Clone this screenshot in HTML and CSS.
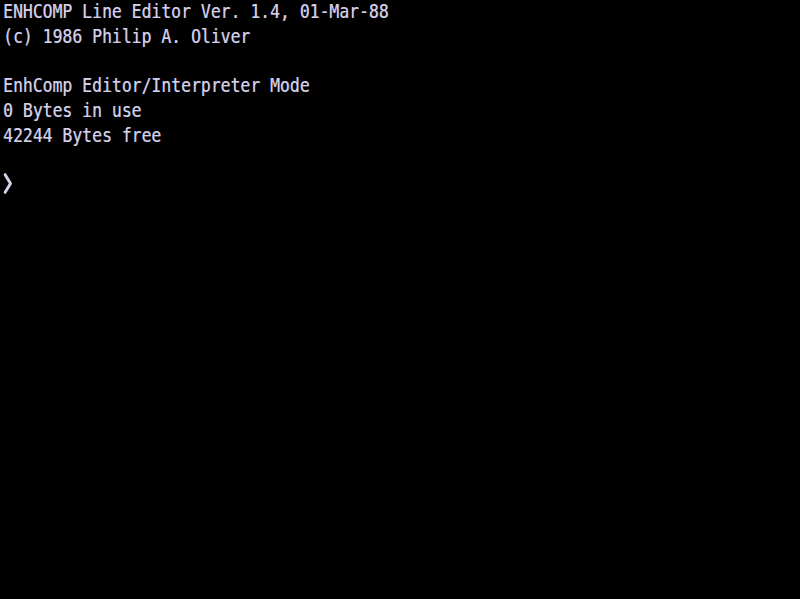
FILE: index.html
```html
<!DOCTYPE html>
<html>
<head>
<meta charset="utf-8">
<link rel="stylesheet" href="styles.css">
</head>
<body>
<div class="screen">
  <div class="text">
    <div class="line">ENHCOMP Line Editor Ver. 1.4, 01-Mar-88</div>
    <div class="line">(c) 1986 Philip A. Oliver</div>
    <div class="line"></div>
    <div class="line">EnhComp Editor/Interpreter Mode</div>
    <div class="line">0 Bytes in use</div>
    <div class="line">42244 Bytes free</div>
    <div class="line"></div>
    <div class="line prompt"><svg class="chev" width="12" height="21" viewBox="0 0 12 21"><polyline points="2.5,1.8 8.8,10.5 2.5,19.2" fill="none" stroke="#d4d0ec" stroke-width="3.2" stroke-linejoin="round" stroke-linecap="round"/></svg></div>
  </div>
</div>
</body>
</html>
```
FILE: styles.css
```css
html, body {
  margin: 0;
  padding: 0;
  background: #000;
  width: 800px;
  height: 599px;
  overflow: hidden;
}
.screen {
  padding: 0 0 0 3px;
}
.text {
  font-family: "DejaVu Sans Mono", monospace;
  font-size: 19.2px;
  line-height: 24.8px;
  color: #d4d0ec;
  text-shadow: 0.6px 0 0 rgba(212, 208, 236, 0.55);
  transform: scaleX(0.856);
  transform-origin: 0 0;
}
.line {
  height: 24.8px;
  white-space: pre;
}
.prompt {
  display: flex;
  align-items: flex-start;
}
.chev {
  display: block;
  margin-top: -1px;
}
```
